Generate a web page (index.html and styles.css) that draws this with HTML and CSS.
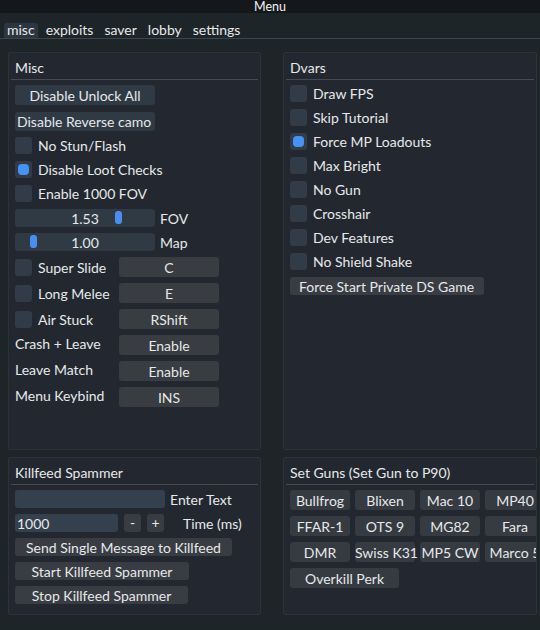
FILE: index.html
```html
<!DOCTYPE html>
<html>
<head>
<meta charset="utf-8">
<link rel="stylesheet" href="styles.css">
</head>
<body>
<div class="titlebar">Menu</div>
<div class="tabs">
  <div class="tab active">misc</div>
  <div class="tab">exploits</div>
  <div class="tab">saver</div>
  <div class="tab">lobby</div>
  <div class="tab">settings</div>
</div>
<div class="content">
  <div class="panel">
    <div class="header">Misc</div>
    <div class="body">
      <div class="btn wide first">Disable Unlock All</div>
      <div class="btn wide second">Disable Reverse camo</div>
      <div class="cbrow"><span class="cb"></span><span>No Stun/Flash</span></div>
      <div class="cbrow"><span class="cb on"></span><span>Disable Loot Checks</span></div>
      <div class="cbrow"><span class="cb"></span><span>Enable 1000 FOV</span></div>
      <div class="sliderrow"><div class="slider"><span>1.53</span><i class="grab g-fov"></i></div><span class="slabel">FOV</span></div>
      <div class="sliderrow"><div class="slider"><span>1.00</span><i class="grab g-map"></i></div><span class="slabel">Map</span></div>
      <div class="keyrow"><div class="keylabel"><span class="cb"></span><span>Super Slide</span></div><div class="btn key">C</div></div>
      <div class="keyrow"><div class="keylabel"><span class="cb"></span><span>Long Melee</span></div><div class="btn key">E</div></div>
      <div class="keyrow"><div class="keylabel"><span class="cb"></span><span>Air Stuck</span></div><div class="btn key">RShift</div></div>
      <div class="keyrow"><div class="keylabel plain">Crash + Leave</div><div class="btn key">Enable</div></div>
      <div class="keyrow"><div class="keylabel plain">Leave Match</div><div class="btn key">Enable</div></div>
      <div class="keyrow"><div class="keylabel plain">Menu Keybind</div><div class="btn key">INS</div></div>
    </div>
  </div>
  <div class="panel">
    <div class="header">Dvars</div>
    <div class="body">
      <div class="cbrow"><span class="cb"></span><span>Draw FPS</span></div>
      <div class="cbrow"><span class="cb"></span><span>Skip Tutorial</span></div>
      <div class="cbrow"><span class="cb on"></span><span>Force MP Loadouts</span></div>
      <div class="cbrow"><span class="cb"></span><span>Max Bright</span></div>
      <div class="cbrow"><span class="cb"></span><span>No Gun</span></div>
      <div class="cbrow"><span class="cb"></span><span>Crosshair</span></div>
      <div class="cbrow"><span class="cb"></span><span>Dev Features</span></div>
      <div class="cbrow"><span class="cb"></span><span>No Shield Shake</span></div>
      <div class="btn gray dsbtn">Force Start Private DS Game</div>
    </div>
  </div>
  <div class="panel">
    <div class="header">Killfeed Spammer</div>
    <div class="body">
      <div class="inrow"><div class="input long"></div><span class="inlabel">Enter Text</span></div>
      <div class="inrow"><div class="input short">1000</div><div class="btn gray pm">-</div><div class="btn gray pm">+</div><span class="inlabel time">Time (ms)</span></div>
      <div class="btn gray kf kf-send">Send Single Message to Killfeed</div>
      <div class="btn gray kf kf-start">Start Killfeed Spammer</div>
      <div class="btn gray kf kf-stop">Stop Killfeed Spammer</div>
    </div>
  </div>
  <div class="panel">
    <div class="header">Set Guns (Set Gun to P90)</div>
    <div class="body">
      <div class="guns">
        <div class="btn gun">Bullfrog</div>
        <div class="btn gun">Blixen</div>
        <div class="btn gun">Mac 10</div>
        <div class="btn gun">MP40</div>
        <div class="btn gun">FFAR-1</div>
        <div class="btn gun">OTS 9</div>
        <div class="btn gun">MG82</div>
        <div class="btn gun">Fara</div>
        <div class="btn gun">DMR</div>
        <div class="btn gun">Swiss K31</div>
        <div class="btn gun">MP5 CW</div>
        <div class="btn gun">Marco 5</div>
      </div>
      <div class="btn gun perk">Overkill Perk</div>
    </div>
  </div>
</div>
</body>
</html>
```
FILE: styles.css
```css
html, body {
  margin: 0;
  padding: 0;
}
body {
  width: 540px;
  height: 630px;
  overflow: hidden;
  background: #1e2528;
  color: #e6e8ea;
  font-family: Lato, "Open Sans", sans-serif;
  font-size: 14px;
}
.titlebar {
  height: 13px;
  line-height: 13px;
  font-size: 12.5px;
  background: #14181b;
  text-align: center;
  color: #f2f2f2;
}
.tabs {
  display: flex;
  align-items: flex-end;
  height: 26px;
  padding-left: 4px;
  border-bottom: 1px solid #3a4550;
  box-sizing: border-box;
  gap: 5px;
}
.tab {
  height: 15px;
  line-height: 14px;
  padding: 0 3px;
  border-radius: 3px 3px 0 0;
}
.tab.active {
  background: #2c3640;
}
.content {
  display: grid;
  grid-template-columns: 253px 254px;
  grid-template-rows: 398px 158px;
  column-gap: 22px;
  row-gap: 7px;
  padding: 13px 0 0 8px;
}
.panel {
  background: #232830;
  border: 1px solid #2c323b;
  border-radius: 2px;
  box-sizing: border-box;
  overflow: hidden;
}
.header {
  margin: 5px 2px 0;
  padding-left: 4px;
  height: 21px;
  line-height: 20px;
  border-bottom: 1px solid #434a54;
}
.body {
  padding: 5px 0 0 6px;
}
.btn {
  box-sizing: border-box;
  height: 20px;
  line-height: 21px;
  text-align: center;
  border-radius: 3px;
  background: #303a45;
  white-space: nowrap;
  overflow: hidden;
}
.btn.wide {
  width: 140px;
}
.btn.first {
  margin-bottom: 7px;
}
.btn.second {
  height: 19px;
  line-height: 20px;
  margin-bottom: 6px;
  text-align: left;
  padding-left: 2px;
}
.cbrow {
  display: flex;
  align-items: center;
  height: 17px;
  line-height: 18px;
  margin-bottom: 7px;
  gap: 6px;
}
.cb {
  width: 17px;
  height: 17px;
  border-radius: 3px;
  background: #313c48;
  box-sizing: border-box;
  position: relative;
  flex: none;
}
.cb.on::after {
  content: "";
  position: absolute;
  left: 3px;
  top: 3px;
  width: 11px;
  height: 11px;
  border-radius: 4px;
  background: #4594f5;
}
.sliderrow {
  display: flex;
  align-items: center;
  height: 18px;
  margin-bottom: 6px;
  gap: 5px;
}
.slider {
  position: relative;
  width: 140px;
  height: 18px;
  line-height: 19px;
  background: #2f3a45;
  border-radius: 3px;
  text-align: center;
}
.slabel {
  line-height: 19px;
}
.grab {
  position: absolute;
  top: 2px;
  width: 7px;
  height: 13px;
  border-radius: 3px;
  background: #4a8ff0;
}
.g-fov { left: 100px; }
.g-map { left: 15px; }
.keyrow {
  display: grid;
  grid-template-columns: 104px 100px;
  align-items: center;
  height: 20px;
  margin-bottom: 6px;
}
.keylabel {
  display: flex;
  align-items: center;
  gap: 6px;
  white-space: nowrap;
}
.keylabel.plain {
  margin-top: -3px;
}
.btn.key {
  background: #393c41;
  height: 20px;
  line-height: 21px;
}
.btn.gray {
  background: #393d43;
}
.dsbtn {
  width: 194px;
  height: 18px;
  line-height: 19px;
  text-align: left;
  padding-left: 9px;
}
.inrow {
  display: flex;
  align-items: center;
  height: 18px;
  margin-bottom: 6px;
}
.input {
  height: 18px;
  line-height: 19px;
  background: #34404d;
  border-radius: 3px;
  box-sizing: border-box;
}
.input.long {
  width: 150px;
}
.input.short {
  width: 103px;
  padding-left: 2px;
}
.inlabel {
  margin-left: 5px;
  line-height: 19px;
}
.inlabel.time {
  margin-left: 19px;
}
.btn.pm {
  width: 17px;
  height: 18px;
  line-height: 18px;
  margin-left: 6px;
}
.btn.kf {
  height: 18px;
  line-height: 19px;
  margin-bottom: 6px;
}
.kf-send { width: 217px; }
.kf-start { width: 174px; }
.kf-stop { width: 173px; }
.guns {
  display: grid;
  grid-template-columns: repeat(4, 60px);
  column-gap: 5px;
  row-gap: 6px;
  width: 260px;
}
.btn.gun {
  background: #363b42;
  overflow: visible;
  padding: 0;
}
.btn.perk {
  width: 109px;
  margin-top: 6px;
}
```
